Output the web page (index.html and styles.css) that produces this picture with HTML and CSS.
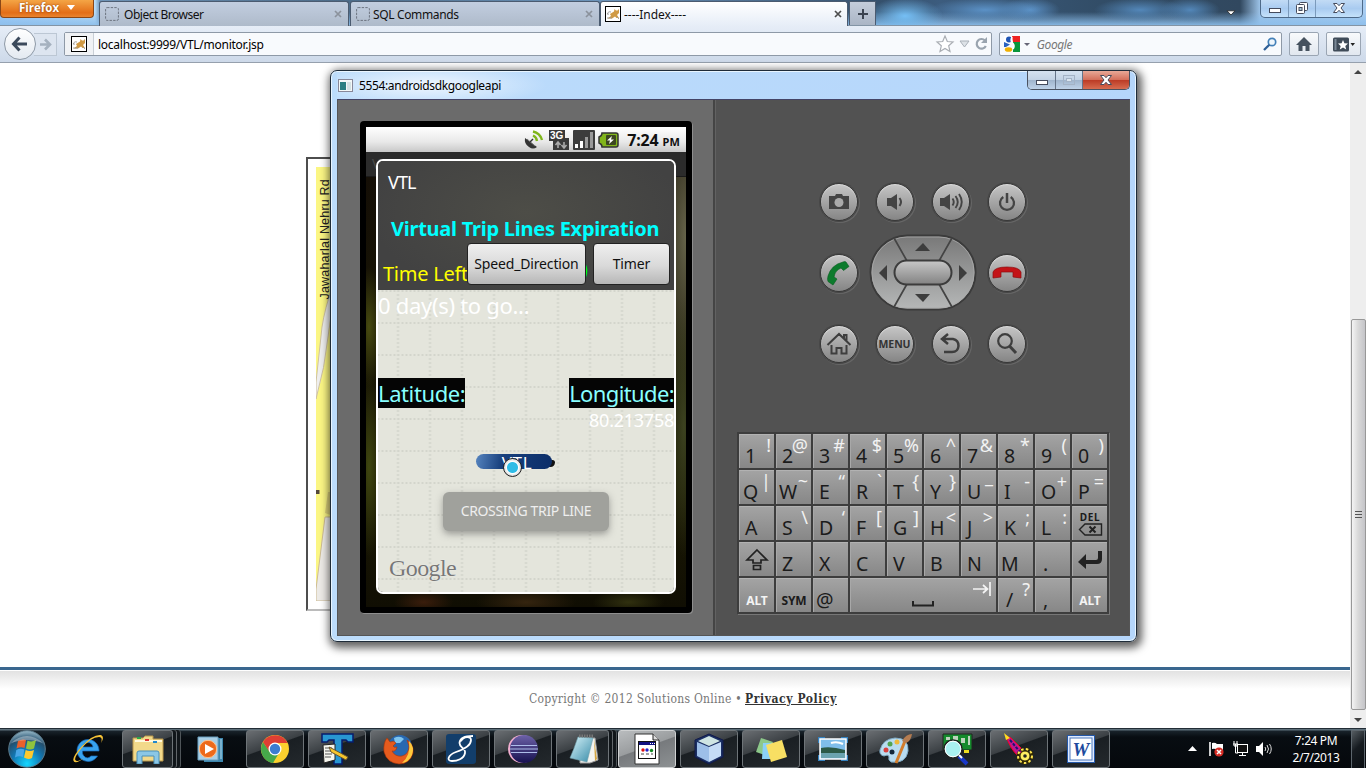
FILE: index.html
```html
<!DOCTYPE html>
<html lang="en">
<head>
<meta charset="utf-8">
<title>----Index----</title>
<link rel="stylesheet" href="styles.css">
</head>
<body>
<svg width="0" height="0" class="defs">
  <defs>
    <symbol id="cat" viewBox="0 0 16 16"><rect x=".5" y=".5" width="15" height="15" fill="#fff" stroke="#000"/><path d="M5 8L9 5.500L9.500 3L11 4.500H12.500L14 3L14 7L12 9L14 12L11.500 12L10 10.500L7 12.500H2.500L6 10Z" fill="#d09a45"/><path d="M4 8Q1.500 9 2.500 7Q4 5 6 6M2 12h5M12 11l2 2" stroke="#999" fill="none" stroke-width=".9"/></symbol>
    <symbol id="blank" viewBox="0 0 14 14"><rect x=".6" y=".6" width="12.8" height="12.8" rx="1.500" fill="none" stroke="#6d7480" stroke-dasharray="2.400 1.200"/></symbol>
    <symbol id="x" viewBox="0 0 8 8"><path d="M1 1L7 7M7 1L1 7" stroke="currentColor" stroke-width="1.700"/></symbol>
    <symbol id="winx" viewBox="0 0 14 12"><path d="M1.500 1.500H5L7 3.700L9 1.500H12.500L9 6L12.500 10.500H9L7 8.300L5 10.500H1.500L5 6Z" fill="#fff" stroke="#454b5c"/></symbol>
    <linearGradient id="pad" x1="0" y1="0" x2="0" y2="1"><stop offset="0" stop-color="#787878"/><stop offset="1" stop-color="#b6b8b8"/></linearGradient>
    <linearGradient id="pill" x1="0" y1="0" x2="0" y2="1"><stop offset="0" stop-color="#c8c8c8"/><stop offset="1" stop-color="#828282"/></linearGradient>
    <radialGradient id="orb" cx=".5" cy=".9" r=".9"><stop offset="0" stop-color="#16d7ff"/><stop offset=".45" stop-color="#1178b4"/><stop offset=".75" stop-color="#24506f"/><stop offset="1" stop-color="#9bbccb"/></radialGradient>
    <linearGradient id="glassblue" x1="0" y1="0" x2="1" y2="1"><stop offset="0" stop-color="#d9f4fa"/><stop offset="1" stop-color="#378ba8"/></linearGradient>
    <linearGradient id="ecl" x1="0" y1="0" x2="0" y2="1"><stop offset="0" stop-color="#6d62a8"/><stop offset="1" stop-color="#16104f"/></linearGradient>
  </defs>
</svg>
<div class="desktop">
  <header class="titlebar">
    <button class="ffmenu">Firefox <i class="tri-w"></i></button>
    <div class="tabs">
      <div class="tab"><svg class="i14"><use href="#blank"/></svg><span>Object Browser</span><svg class="tabx"><use href="#x"/></svg></div>
      <div class="tab"><svg class="i14"><use href="#blank"/></svg><span class="t2">SQL Commands</span><svg class="tabx"><use href="#x"/></svg></div>
      <div class="tab active"><svg class="i16"><use href="#cat"/></svg><span>----Index----</span><svg class="tabx"><use href="#x"/></svg></div>
      <div class="newtab"><svg width="12" height="12"><path d="M6 1V11M1 6H11" stroke="#3b4350" stroke-width="2"/></svg></div>
    </div>
    <svg class="listtabs" width="10" height="6"><path d="M1 .8H9L5 5Z" fill="#fff" stroke="#222" stroke-width=".8"/></svg>
    <div class="winbtns">
      <div class="wb w1"><svg width="12" height="6"><rect x=".5" y=".5" width="11" height="4" fill="#fff" stroke="#454b5c"/></svg></div>
      <div class="wb w2"><svg width="12" height="12"><rect x="3.500" y=".5" width="8" height="8" rx="1" fill="#fff" stroke="#454b5c"/><rect x=".5" y="2.500" width="8" height="9" rx="1" fill="#fff" stroke="#454b5c"/><rect x="3" y="5.500" width="3" height="3" fill="#acd" stroke="#454b5c"/></svg></div>
      <div class="wb w3"><svg width="14" height="12"><use href="#winx"/></svg></div>
    </div>
  </header>

  <nav class="toolbar">
    <div class="navbtns">
      <div class="back"><svg width="18" height="16"><path d="M8.500 1.500L2.500 8L8.500 14.500M3 8H16" fill="none" stroke="#3c4a5c" stroke-width="3"/></svg></div>
      <div class="fwd"><svg width="13" height="13"><path d="M6 1.500L11 6.500L6 11.500M11 6.500H1" fill="none" stroke="#a5b1bf" stroke-width="2.600"/></svg></div>
    </div>
    <div class="url">
      <div class="ident"><svg class="i16"><use href="#cat"/></svg></div>
      <span class="urltext">localhost:9999/VTL/monitor.jsp</span>
      <svg width="56" height="20" class="urlicons"><path d="M10 2L12.300 7.500L18 8L13.700 11.800L15 17.500L10 14.500L5 17.500L6.300 11.800L2 8L7.700 7.500Z" fill="#fff" stroke="#a9adb3" stroke-width="1.200"/><path d="M25 7H34L29.500 13Z" fill="#dde2e7" stroke="#a9b0b8"/><path d="M50 6.500A4.800 4.800 0 1 0 50.800 12" fill="none" stroke="#9aa4af" stroke-width="2.200"/><path d="M52 3V9H46Z" fill="#9aa4af"/></svg>
    </div>
    <div class="search">
      <svg width="16" height="16"><path d="M8 0H16V6H9Z" fill="#e22"/><path d="M9 6H16V16H9Z" fill="#0a963c"/><path d="M0 0H8V8H0Z" fill="#fff"/><circle cx="5" cy="3.500" r="3" fill="#1f55b5"/><path d="M0 6L6 8.500L2 11H0Z" fill="#2a62c0"/><path d="M8 1Q6 5 9 7.500Q11 10 9 13" stroke="#fff" stroke-width="1.600" fill="none"/><ellipse cx="4.500" cy="13.500" rx="3.700" ry="2.300" fill="#f0b000"/></svg>
      <i class="tri-g"></i><em>Google</em>
      <svg class="mag" width="14" height="14"><circle cx="9" cy="5" r="3.700" fill="#eef6fd" stroke="#4380b8" stroke-width="1.700"/><path d="M6.300 7.700L1 13" stroke="#2f6098" stroke-width="2.300"/></svg>
    </div>
    <div class="tbtn home"><svg width="16" height="15"><path d="M8 0L16 8H13.500V14H9.500V9H6.500V14H2.500V8H0Z" fill="#46525f"/></svg></div>
    <div class="tbtn bm"><svg width="22" height="15"><rect x="0" y=".5" width="16" height="14" rx="1.500" fill="#3f4b58"/><rect x="1.500" y="2" width="2" height="11" fill="#7a8896"/><path d="M10 3L11.400 6.300L15 6.500L12.300 9L13.200 12.500L10 10.500L6.800 12.500L7.700 9L5 6.500L8.600 6.300Z" fill="#fff"/><path d="M17.500 6H22L19.700 9Z" fill="#222"/></svg></div>
  </nav>

  <main class="page">
    <div class="content">
      <div class="mapframe">
        <div class="map">
          <svg width="40" height="434"><path d="M40 60Q11 125 6 160L0 215V232Q9 200 12 170Q15 130 40 80Z" fill="#eee" stroke="#cfc2a0"/><path d="M12 325H40V350H20L9 346Z" fill="#ddd27a"/><path d="M9 350H40V434H0V422Z" fill="#eceae6" stroke="#cdbb94"/><rect x="0" y="323" width="3.500" height="4" fill="#54493a"/></svg>
          <span class="road">Jawaharlal Nehru Rd</span>
        </div>
      </div>
      <footer><span class="copy">Copyright © 2012 Solutions Online •</span><a>Privacy Policy</a></footer>
    </div>
    <div class="scroll"><i class="up"></i><div class="thumb"><i></i><i></i><i></i></div><i class="down"></i></div>
  </main>

  <div class="taskbar">
    <div class="start"><svg width="40" height="40"><circle cx="20" cy="20" r="18.300" fill="url(#orb)" stroke="#5c7b8c"/><path d="M11 12q4-2.500 8-1l-1.500 8q-4-1.500-8 .5z" fill="#e9602b"/><path d="M20.500 11.500q4 2 8.500-.5l-2 8.500q-4 2-8 0z" fill="#8fc33e"/><path d="M9.300 21q4-2 8-.5L16 28q-4-1.500-8 .5z" fill="#48a6e6"/><path d="M18.700 21q4 2 8.300 0l-2 8q-4 2-8-.5z" fill="#fdc92e"/><path d="M4 14Q20 0 36 14Q20 8 4 14Z" fill="#fff" opacity=".35"/></svg></div>
    <div class="plain ie"><svg width="34" height="32"><path d="M28 17A11 11 0 1 0 26.500 23H20Q16 27 12.500 22.500Q11 20.500 11.500 18H28ZM11.700 14Q13 9.500 17 9.500Q21 9.500 22 14Z" fill="#38a3ee" stroke="#1769ba" stroke-width=".7"/><path d="M3.500 29Q-1 26 11 13Q22 1 30 2Q34 4 30 10Q32 4 28 4Q20 4 10 16Q0 28 7 28Q10 27 13 25Q7 30 3.500 29Z" fill="#f5c237"/></svg></div>
    <div class="task stack s1"><svg width="34" height="30"><path d="M2 27V4H12L14 2H22V5H32V27Z" fill="#f2d98a" stroke="#b9964a"/><path d="M4 7H31" stroke="#fff9dd" stroke-width="2"/><path d="M6 3h4v2H6z" fill="#2aa84a"/><path d="M14 5h4v2h-4z" fill="#d33"/><path d="M22 7h4v2h-4z" fill="#28c"/><path d="M6 30V19Q6 17 8 17H26Q28 17 28 19V30H23V22H11V30Z" fill="#8bc7e6" stroke="#4a90b8"/></svg></div>
    <div class="plain wmp"><svg width="30" height="28"><path d="M8 3H27V27H8Z" fill="#3d86ad"/><path d="M2 2H22V25H2Z" fill="#a9cfe6" stroke="#6ba0c0"/><path d="M25 4V24" stroke="#b6ddf0"/><circle cx="12" cy="14" r="8.700" fill="#ed6a1b" stroke="#ffc48f"/><path d="M9 9L18 14L9 19Z" fill="#fff"/></svg></div>
    <div class="task"><svg width="30" height="30"><circle cx="15" cy="15" r="14" fill="#fbd02e"/><path d="M3 8A14 14 0 0 0 13 29L19 19L10 18Z" fill="#46a84a"/><path d="M3 8L9 17L15 9H27.500A14 14 0 0 0 3 8Z" fill="#de3e33"/><circle cx="15" cy="15" r="6.500" fill="#fff"/><circle cx="15" cy="15" r="5.200" fill="#3c7dd0"/></svg></div>
    <div class="task"><svg width="34" height="34"><path d="M2 2H33V10H28L26 8H22V32H14V8H9L7 10H2Z" fill="#2897d2" stroke="#071c6c" stroke-width="1.500"/><path d="M3 13L15 12V28L4 31Z" fill="#f6f6ee" stroke="#222"/><path d="M5 16h7M5 19h7M5 22h7M5 25h6" stroke="#555"/><path d="M9 15L13 17L28 25L26 28L11 20Z" fill="#f6c52c" stroke="#653"/></svg></div>
    <div class="task"><svg width="34" height="32"><circle cx="18" cy="14" r="12" fill="#2868b0"/><path d="M12 5Q18 2 22 6L18 10L13 10Z" fill="#7fc4ee"/><path d="M5 5L8 9Q12 7 14 10L11 13Q12 15 15 14Q14 19 10 18Q13 24 20 23Q27 21 27 13L25 7Q32 11 31 20Q28 31 17 31Q5 30 2 19Q1 10 5 5Z" fill="#e65b1d" stroke="#a63409" stroke-width=".6"/><path d="M27 8Q33 14 30 22Q27 29 20 30Q29 22 27 8Z" fill="#fdc93c"/></svg></div>
    <div class="task"><svg width="32" height="32"><rect x="1" y="1" width="30" height="30" rx="3" fill="#123e6b"/><path d="M28 3Q15 3 14.500 10C14.500 15 21 15 20 20C19 26 12 28 7 28C1 28 3 22 11 19C20 16 26 12 26 7C26 3 19 3 16 8" fill="none" stroke="#fff" stroke-width="1.800"/></svg></div>
    <div class="task"><svg width="32" height="32"><circle cx="15" cy="16" r="14" fill="#f1aed0"/><circle cx="17" cy="16" r="14" fill="url(#ecl)"/><path d="M4 12.500H30M3 16H31M4 19.500H30" stroke="#aebdea" stroke-width="1.200"/></svg></div>
    <div class="task stack s2"><svg width="32" height="32"><path d="M13 5H28L31 27L23 30H13Z" fill="#f3f3ef" stroke="#999"/><path d="M27 6L30 26L28 28Z" fill="#d2a340"/><path d="M11 4L26 5L20 29L3 25Q7 16 11 4Z" fill="url(#glassblue)" stroke="#6f9da9" stroke-width=".6"/><path d="M12 3h15" stroke="#777" stroke-width="3" stroke-dasharray="1.500 1"/></svg></div>
    <div class="task on"><svg width="28" height="32"><path d="M2 1H20L26 7V31H2Z" fill="#fff" stroke="#333"/><path d="M20 1V7H26" fill="#ddd" stroke="#222"/><rect x="5.500" y="8.500" width="17" height="17" fill="#fff" stroke="#111"/><path d="M6 9h16v3H6z" fill="#101080"/><path d="M17 10.500h1m1 0h1m1 0h1" stroke="#fff"/><circle cx="10" cy="17" r="1.700" fill="#d11"/><circle cx="14" cy="17" r="1.700" fill="#22c"/><circle cx="18.500" cy="17.500" r="1.700" fill="#182"/><path d="M8 21h3m2 0h3m2 0h2" stroke="#444"/></svg></div>
    <div class="task"><svg width="32" height="32"><path d="M16 1L30 7V24L16 31L2 24V7Z" fill="#1b2f63" stroke="#111a4a"/><path d="M16 3L27 8L16 13L5 8Z" fill="#cfe5e3"/><path d="M4 9L16 14V29L4 23Z" fill="#9dbfe8"/><path d="M28 9L16 14V29L28 23Z" fill="#c5dcf6"/></svg></div>
    <div class="task"><svg width="34" height="30"><path d="M7 4L19 8L14 22L2 18Z" fill="#8cc88a"/><path d="M9 9L22 9V25H8Z" fill="#8bd0f7"/><path d="M12 11L28 6L33 23L17 28Z" fill="#f8df63"/></svg></div>
    <div class="task"><svg width="32" height="28"><path d="M1 2H8V8H1ZM24 2H31V8H24ZM1 20H8V26H1ZM24 20H31V26H24Z" fill="#3481bf"/><rect x="3" y="4" width="26" height="20" fill="#7fbdea" stroke="#fff" stroke-width="1.500"/><path d="M4 13Q14 11 28 15V19H4Z" fill="#2b5947"/><path d="M4 18H28V23H4Z" fill="#6aa3af"/><path d="M14 8q6-2 12 1" stroke="#fff" fill="none" stroke-width="2"/></svg></div>
    <div class="task"><svg width="34" height="32"><path d="M17 5Q31 5 30 18Q28 31 13 29Q10 27 11 24Q11 21 6 23Q1 22 2 17Q5 6 17 5Z" fill="#b9dcf0" stroke="#7faac4"/><circle cx="8" cy="17" r="2.500" fill="#d8403e"/><circle cx="12" cy="11" r="2.500" fill="#51a351"/><circle cx="19" cy="9" r="2.500" fill="#edb93b"/><circle cx="14" cy="19" r="2.500" fill="#132638"/><path d="M27 8L18 30" stroke="#d37d2c" stroke-width="3"/><path d="M24 8Q28 1 34 1Q33 8 28 10Z" fill="#b47c51"/></svg></div>
    <div class="task"><svg width="34" height="34"><path d="M3 2H32V18H3Z" fill="#148a2c" stroke="#222"/><path d="M6 5h4v3H6zM13 4h5v4h-5zM21 6h4v5h-4zM28 4h2v9h-2z" fill="#bcd3bc"/><rect x="24" y="18" width="5" height="3" fill="#ed2"/><circle cx="13" cy="17" r="9" fill="#a8f0f0" stroke="#222" stroke-width="1.500"/><circle cx="13" cy="17" r="7.800" fill="none" stroke="#fff" stroke-width="1"/><path d="M19 24L27 32" stroke="#1837c8" stroke-width="4"/><path d="M19 23L22 26" stroke="#fff" stroke-width="2"/></svg></div>
    <div class="task"><svg width="32" height="34"><path d="M3 4L8 6L21 19L14 23Q7 16 3 4Z" fill="#c2158d" stroke="#f02"/><path d="M7 8L17 20" stroke="#1b1470" stroke-width="2" stroke-dasharray="3 1.500"/><path d="M1 1L7 6L3 8Z" fill="#fd2"/><circle cx="22" cy="24" r="6" fill="none" stroke="#332a00" stroke-width="5" stroke-dasharray="3 1.700"/><circle cx="22" cy="24" r="5" fill="#ffee62" stroke="#362c00"/><circle cx="22" cy="24" r="7" fill="none" stroke="#ffe650" stroke-width="2" stroke-dasharray="2.500 2.300"/><circle cx="22" cy="24" r="1.800" fill="#222"/></svg></div>
    <div class="task"><svg width="30" height="30"><rect x="1.500" y="1.500" width="27" height="27" fill="#dfeaff" stroke="#2458a9"/><rect x="4" y="4" width="22" height="22" fill="#fff" stroke="#4d78bd"/><text x="15" y="22" text-anchor="middle" class="wletter">W</text></svg></div>
    <div class="tray">
      <svg width="40" height="18"><path d="M3 11L7.500 6L12 11Z" fill="#fff"/><path d="M25 2V16" stroke="#fff" stroke-width="1.600"/><path d="M27 3Q30 2 32 4H38V10H32Q30 8 27 9Z" fill="#fff"/><circle cx="34" cy="12" r="4.600" fill="#d62c25"/><path d="M32 10L36 14M36 10L32 14" stroke="#fff" stroke-width="1.500"/></svg>
      <svg width="15" height="16"><rect x="4.500" y="3.500" width="10" height="8" fill="#111" stroke="#fff"/><path d="M0 3H5M2.500 3V12H5M1 0V5H4V0M6 14.500H13M9.500 12V15" fill="none" stroke="#fff"/></svg>
      <svg width="16" height="16"><path d="M0 5H3L7 1V15L3 11H0Z" fill="#fff"/><path d="M9 6q1.500 2 0 4M11 4q3 4 0 8M13.500 3q3.500 5 0 10" fill="none" stroke="#ddd"/></svg>
    </div>
    <div class="clock"><span>7:24 PM</span><span>2/7/2013</span></div>
    <div class="showdesk"></div>
  </div>

  <section class="emu">
    <div class="emutitle">
      <svg width="15" height="13"><rect x=".5" y=".5" width="14" height="12" fill="#f4f8f8" stroke="#889"/><rect x="2" y="3" width="6" height="8" fill="#2b7f82"/><rect x="9" y="3" width="4" height="8" fill="#d5e2e4"/></svg>
      <span class="emuname">5554:androidsdkgoogleapi</span>
      <div class="emubtns">
        <div class="eb e1"><svg width="12" height="6"><rect x=".5" y=".5" width="11" height="4" fill="#fff" stroke="#454b5c"/></svg></div>
        <div class="eb e2"><svg width="12" height="10"><rect x=".5" y=".5" width="11" height="9" fill="none" stroke="#a4b3c6"/><rect x="3.500" y="3.500" width="5" height="3" fill="#dbe6f0" stroke="#a4b3c6"/></svg></div>
        <div class="eb e3"><svg width="14" height="12"><use href="#winx"/></svg></div>
      </div>
    </div>
    <div class="emubody">
      <div class="left">
        <div class="bezel"><div class="screen">
          <div class="status">
            <svg width="22" height="20"><path d="M2 8Q1 14 6 17Q10 20 14 17Z" fill="#333"/><path d="M4 9L12 16" stroke="#777"/><path d="M7 12L10 9" stroke="#333" stroke-width="1.500"/><path d="M10 5.500Q13.500 7 14 11M10 1.500Q17 3 19 10" fill="none" stroke="#7eb51a" stroke-width="2.400"/></svg>
            <svg width="22" height="22"><path d="M1 1H17V9H21V21H5V12H1Z" fill="#3a3a3a"/><text x="2" y="10" class="g3">3G</text><path d="M10 19V14M7.500 16L10 13L12.500 16M16 13V18M13.500 16L16 19L18.500 16" stroke="#aaa" stroke-width="1.600" fill="none"/></svg>
            <svg width="22" height="22"><rect x="0" y="1" width="22" height="20" rx="1" fill="#3c3c3c"/><path d="M3.500 19V15M8.500 19V12" stroke="#fff" stroke-width="3"/><path d="M13.500 19V8M18.500 19V3" stroke="#999" stroke-width="3"/></svg>
            <svg width="21" height="16"><path d="M4 1H18Q20 1 20 3V13Q20 15 18 15H4Q4 12 1 11V5Q4 4 4 1Z" fill="#81b51b" stroke="#333" stroke-width="1.500"/><rect x="8" y="3" width="10" height="10" rx="1" fill="#3c4721"/><path d="M14 4L9 8.500H12L11 12L16 7.500H13Z" fill="#fff"/></svg>
            <b>7:24 <small>PM</small></b>
          </div>
          <div class="apptitle">VTL</div>
          <div class="dialog">
            <div class="dtop">
              <div class="dname">VTL</div>
              <div class="dhead">Virtual Trip Lines Expiration</div>
              <div class="drow"><span class="tleft">Time Left</span><i class="green">)</i><span class="abtn sp">Speed_Direction</span><span class="abtn ti">Timer</span></div>
            </div>
            <div class="dmap">
              <svg class="grid" width="296" height="302"><defs><pattern id="mg" width="32" height="32" patternUnits="userSpaceOnUse" x="3.500" y="0"><path d="M0 1H32M16.500 0V32" stroke="#d3d5cc" stroke-width="2" stroke-dasharray="2 2"/></pattern></defs><rect width="296" height="302" fill="url(#mg)"/></svg>
              <div class="days">0 day(s) to go...</div>
              <div class="coords"><div><mark>Latitude:</mark></div><div class="lon"><mark>Longitude:</mark><span>80.213758</span></div></div>
              <div class="marker"><i class="tip"></i><div class="vpill">VTL</div><i class="dot"></i></div>
              <div class="toast">CROSSING TRIP LINE</div>
              <div class="goog">Google</div>
            </div>
          </div>
        </div></div>
      </div>
      <div class="right">
        <div class="hw">
          <div class="hb"><svg width="24" height="20"><path d="M2 4H8L9 2H15L16 4H22V17H2Z" fill="#444"/><circle cx="12" cy="10.500" r="4.500" fill="#aaa"/></svg></div>
          <div class="hb"><svg width="20" height="18"><path d="M2 5H6L12 1V17L6 13H2Z" fill="#444"/><path d="M14.500 5Q17.500 9 14.500 13" fill="none" stroke="#444" stroke-width="2"/></svg></div>
          <div class="hb"><svg width="26" height="20"><path d="M2 6H6L12 2V18L6 14H2Z" fill="#444"/><path d="M14.500 6.500Q17 10 14.500 13.500M17.500 4Q22 10 17.500 16M21 2Q26.500 10 21 18" fill="none" stroke="#444" stroke-width="1.900"/></svg></div>
          <div class="hb"><svg width="20" height="20"><path d="M6.300 5A7 7 0 1 0 13.700 5" fill="none" stroke="#444" stroke-width="2.300"/><path d="M10 1V11" stroke="#444" stroke-width="2.500"/></svg></div>
          <div class="hb"><svg width="28" height="26"><path d="M3 16Q6 5 18 2Q20 1 21 2L24 6.500L18.500 10.500L16 8Q10 10.500 9 17L12 19L8 25L3 21.500Q2 20 3 16Z" fill="#0c7b2c" stroke="#075c1f" stroke-width=".6"/></svg></div>
          <div class="dpad"><svg width="108" height="78"><rect x="1.500" y="1.500" width="105" height="74" rx="37" fill="url(#pad)" stroke="#3b3b3b" stroke-width="2"/><rect x="3" y="3" width="102" height="71" rx="35" fill="none" stroke="#aaa" stroke-width=".8"/><path d="M25 4L38 27M83 4L70 27M25 73L38 50M83 73L70 50" stroke="#444" stroke-width="1.700"/><rect x="25.500" y="26.500" width="57" height="24" rx="12" fill="url(#pill)" stroke="#3c3c3c" stroke-width="2"/><path d="M46 17L54 9L61 17ZM18 31V47L10 39ZM90 31V47L98 39ZM46 60H61L54 68Z" fill="#3d3d3d"/></svg></div>
          <div class="hb"><svg width="30" height="14"><path d="M1 6Q3 1 15 1Q27 1 29 6V12L21 11V6H9V11L1 12Z" fill="#c31317" stroke="#8d0c0f" stroke-width=".7"/></svg></div>
          <div class="hb"><svg width="26" height="24"><path d="M1.500 13L13 2L24.500 13M18 6V3H20.500V9M5.500 13V21.500H10.500V16H15.500V21.500H20.500V13" fill="none" stroke="#3e3e3e" stroke-width="2"/></svg></div>
          <div class="hb menu">MENU</div>
          <div class="hb"><svg width="24" height="24"><path d="M9 2L3 7L9 12M3.500 7H14Q19.500 8 19.500 14Q19 20 13 20H5" fill="none" stroke="#3e3e3e" stroke-width="2.500"/></svg></div>
          <div class="hb"><svg width="24" height="24"><circle cx="10" cy="9" r="6.800" fill="none" stroke="#3e3e3e" stroke-width="2.200"/><path d="M14.500 14L21 21" stroke="#3e3e3e" stroke-width="3"/></svg></div>
        </div>
        <div class="kb">
          <div class="k">1<i>!</i></div><div class="k">2<i>@</i></div><div class="k">3<i>#</i></div><div class="k">4<i>$</i></div><div class="k">5<i>%</i></div><div class="k">6<i>^</i></div><div class="k">7<i>&amp;</i></div><div class="k">8<i>*</i></div><div class="k">9<i>(</i></div><div class="k">0<i>)</i></div>
          <div class="k q">Q<i>|</i></div><div class="k w">W<i>~</i></div><div class="k">E<i>“</i></div><div class="k">R<i>`</i></div><div class="k">T<i>{</i></div><div class="k">Y<i>}</i></div><div class="k">U<i class="us">_</i></div><div class="k">I<i>-</i></div><div class="k">O<i>+</i></div><div class="k">P<i>=</i></div>
          <div class="k">A</div><div class="k">S<i>\</i></div><div class="k">D<i>‘</i></div><div class="k">F<i>[</i></div><div class="k">G<i>]</i></div><div class="k">H<i>&lt;</i></div><div class="k">J<i>&gt;</i></div><div class="k">K<i>;</i></div><div class="k">L<i>:</i></div>
          <div class="k ic del"><b>DEL</b><svg width="25" height="13"><path d="M1.500 6.500L7 1H23.500V12H7Z" fill="none" stroke="#222" stroke-width="1.400"/><path d="M11.500 3.500L17.500 9.500M17.500 3.500L11.500 9.500" stroke="#222" stroke-width="2"/></svg></div>
          <div class="k ic"><svg width="24" height="24"><path d="M12 2L22 12H16V15H8V12H2Z" fill="none" stroke="#222" stroke-width="1.700"/><path d="M8.500 17.500H15.500V21.500H8.500Z" fill="none" stroke="#222" stroke-width="1.700"/></svg></div><div class="k">Z</div><div class="k">X</div><div class="k">C</div><div class="k">V</div><div class="k">B</div><div class="k">N</div><div class="k w">M</div><div class="k dotk">.</div>
          <div class="k ic"><svg width="26" height="20"><path d="M1 12L9 4V10H19Q21 10 21 8V1H25V9Q25 14 20 14H9V19Z" fill="#222"/></svg></div>
          <div class="k alt">ALT</div><div class="k sym">SYM</div><div class="k w">@</div>
          <div class="k space"><svg width="22" height="7"><path d="M1 1V5.500H21V1" fill="none" stroke="#222" stroke-width="2"/></svg><svg class="tabkey" width="20" height="16"><path d="M1 8H15M11 4L15.500 8L11 12M18 1V15" fill="none" stroke="#f4f4f4" stroke-width="1.700"/></svg></div>
          <div class="k sl">/<i>?</i></div><div class="k dotk">,</div><div class="k alt">ALT</div>
        </div>
      </div>
    </div>
  </section>
</div>
</body>
</html>
```

FILE: styles.css
```css
* { box-sizing: border-box; }
body { margin: 0; overflow: hidden; font-family: "Noto Sans", sans-serif; }
svg { display: block; flex: none; }
.defs { position: absolute; }
.desktop { position: relative; width: 1366px; height: 768px; display: flex; flex-direction: column; overflow: hidden; background: #fff; }
.i14 { width: 14px; height: 14px; }
.i16 { width: 16px; height: 16px; }

/* browser window frame */
.titlebar { height: 26px; display: flex; align-items: flex-start; border-bottom: 1px solid #8394a5;
  background:
    radial-gradient(ellipse 38px 18px at 905px 16px, #75bff5, transparent),
    radial-gradient(ellipse 56px 12px at 985px 10px, #5b91c6, transparent),
    radial-gradient(ellipse 30px 12px at 1030px 10px, #5b91c6, transparent),
    radial-gradient(ellipse 46px 12px at 1140px 10px, #5387b9, transparent),
    radial-gradient(ellipse 30px 12px at 1190px 10px, #5387b9, transparent),
    linear-gradient(transparent 12px, rgba(140,190,235,.9)),
    linear-gradient(90deg, #9ecbfa 0, #b9dcf7 95px, #6e93b6 100px, #4c6b88 340px, #6c94ba 600px, #35506c 880px, #3c5c7e 940px, #324d67 1100px, #31485f 1240px, #9cc3e8 1260px, #a9cdf2 100%); }
.ffmenu { width: 94px; height: 18px; margin: 0 5px 0 0; padding: 0 0 2px; border: 1px solid #8a4717; border-top: 0; border-radius: 0 0 4px 4px; background: linear-gradient(#f4a545, #e36e18 75%, #e9842f); color: #fff; font: bold 11.5px/14px "Open Sans", sans-serif; text-shadow: 0 0 2px #7a3400; display: flex; align-items: center; justify-content: center; gap: 8px; }
.tri-w { border: 4px solid transparent; border-top: 5px solid #fff; border-bottom: 0; }
.tabs { display: flex; gap: 1px; padding-top: 1px; }
.tab { width: 250px; height: 25px; padding: 0 6px 0 5px; display: flex; align-items: center; gap: 5px; border: 1px solid #4b5b70; border-bottom: 0; border-radius: 3px 3px 0 0; background: linear-gradient(#c2cee0, #aebaca); font-size: 12px; letter-spacing: -.48px; color: #111; }
.tab .t2 { margin-left: -2px; letter-spacing: -.35px; }
.tab.active { width: 248px; margin-left: -1px; padding: 0 5px 0 4px; gap: 3px; background: linear-gradient(#fff, #e6edf7); letter-spacing: -.05px; }
.tabx { width: 8px; height: 8px; margin-left: auto; color: #8b929c; }
.active .tabx { color: #4d4d4d; }
.newtab { width: 27px; height: 24px; display: grid; place-items: center; border: 1px solid #4b5b70; border-bottom: 0; background: linear-gradient(#c4cddb, #aab5c5); }
.listtabs { margin: 10px 24px 0 auto; }
.winbtns { display: flex; width: 103px; height: 18px; margin-right: 3px; border: 1px solid #4e6a89; border-top: 0; border-radius: 0 0 5px 5px; background: linear-gradient(#c2dbf5, #a9cbf0 50%, #c5e2fb); }
.wb { display: grid; place-items: center; border-right: 1px solid #7b9abb; padding-bottom: 1px; }
.w1 { width: 28px; padding-top: 5px; } .w2 { width: 27px; } .w3 { flex: 1; border: 0; }

.toolbar { height: 37px; display: flex; align-items: center; gap: 7px; padding: 0 5px 0 4px; background: linear-gradient(#e6edf7, #cdd9e9); border-bottom: 1px solid #96a0ad; }
.navbtns { width: 53px; display: flex; align-items: center; }
.back { width: 32px; height: 32px; border-radius: 50%; border: 1px solid #8e99a6; background: linear-gradient(#fff, #e3e9f1); display: grid; place-items: center; z-index: 1; }
.fwd { width: 23px; height: 23px; margin-left: -2px; display: grid; place-items: center; border: 1px solid #bcc7d4; border-left: 0; background: #dde5f0; }
.url, .search { height: 24px; display: flex; align-items: center; border: 1px solid #8e99a7; border-radius: 2px; background: #f8fafd; }
.url { width: 930px; }
.ident { width: 29px; height: 22px; display: grid; place-items: center; border-right: 1px solid #c9cfd6; background: #f0f2f5; }
.urltext { margin-left: 4px; font-size: 12px; letter-spacing: -.26px; color: #000; }
.urlicons { margin: 0 0 0 auto; }
.search { width: 284px; padding: 0 5px 0 4px; font-size: 12px; color: #777; gap: 4px; margin-right: -1px; }
.search em { margin-left: 3px; letter-spacing: -.4px; }
.tri-g { border: 3px solid transparent; border-top-color: #667; border-bottom: 0; }
.mag { margin-left: auto; margin-right: -1px; }
.tbtn { height: 24px; display: grid; place-items: center; border: 1px solid #9aa5b3; border-radius: 2px; background: linear-gradient(#f8fafc, #e1e7ef); }
.home { width: 30px; margin-left: 1px; } .bm { width: 35px; }

/* web page */
.page { height: 665px; display: flex; }
.content { flex: 1; display: flex; flex-direction: column; justify-content: space-between; padding-top: 94px; }
.mapframe { width: 60px; height: 454px; margin-left: 306px; padding: 8px; border: 2px solid #4d4d4d; border-bottom-color: #bbb; }
.map { position: relative; width: 40px; height: 434px; background: #fbf684; overflow: hidden; }
.road { position: absolute; left: 2px; top: 12px; writing-mode: vertical-rl; transform: rotate(180deg); font: 12.5px/14px "Liberation Sans", sans-serif; letter-spacing: .2px; color: #222; white-space: nowrap; }
footer { height: 61px; border-top: 3px solid #3a678f; padding: 19px 0 0 529px; background: linear-gradient(#fff 1px, #e2e2e2 1px, #fff 19px); display: flex; gap: 3px; font: 12px/20px "DejaVu Serif Condensed", "DejaVu Serif", serif; font-stretch: condensed; color: #777; white-space: nowrap; }
.copy { width: 213px; letter-spacing: .27px; }
footer a { font-weight: bold; color: #333; text-decoration: underline; letter-spacing: .58px; }
.scroll { width: 16px; background: #eee; display: flex; flex-direction: column; align-items: center; padding: 7px 0 6px; }
.up { border: 4px solid transparent; border-bottom-color: #444; border-top: 0; margin-bottom: 245px; }
.thumb { width: 15px; height: 391px; border: 1px solid #989898; border-radius: 2px; background: linear-gradient(90deg, #f4f4f4, #dadada 45%, #c4c4c8); display: flex; flex-direction: column; align-items: center; justify-content: center; gap: 2px; }
.thumb i { width: 7px; height: 1px; background: #555; }
.down { border: 4px solid transparent; border-top-color: #444; border-bottom: 0; margin-top: 8px; }

/* taskbar */
.taskbar { height: 40px; display: flex; align-items: center; padding-top: 1px; background: linear-gradient(#5c6e79 1px, #19232b 2px, #080d12 8px, #05080c); border-top: 1px solid #222c35; }
.start { width: 54px; padding-left: 7px; }
.plain { display: grid; place-items: center; }
.ie { width: 68px; }
.wmp { width: 67px; padding-right: 4px; }
.task { width: 58px; height: 38px; margin-right: 4px; flex: none; display: grid; place-items: center; border: 1px solid #6e7478; border-radius: 3px; background: linear-gradient(160deg, #6a6e72 0, #3b4044 42%, #1a1f23 44%, #24292d 100%); }
.task.on { background: linear-gradient(160deg, #b9bcbe, #9a9d9f 45%, #777a7d 47%, #8d9193); border-color: #cfd1d2; }
.stack { box-shadow: 3px 0 0 #11161a, 4px 0 0 #62676b, 7px 0 0 #11161a, 8px 0 0 #4f5559; }
.s1 { width: 51px; margin-right: 6px; } .s2 { width: 53px; margin-right: 9px; }
.wletter { font: italic bold 19px "Liberation Serif", serif; fill: #1f4b9e; }
.tray { margin-left: 71px; display: flex; align-items: center; gap: 8px; width: 94px; }
.clock { margin-left: 13px; width: 48px; height: 36px; display: flex; flex-direction: column; align-items: center; font-size: 12px; line-height: 17px; color: #fff; letter-spacing: -.4px; white-space: nowrap; padding-top: 1px; }
.showdesk { width: 14px; height: 39px; margin: 0 1px 0 auto; border: 1px solid #5d666d; background: linear-gradient(135deg, #555c61, #161b20 45%, #0a0e12); }

/* emulator window */
.emu { position: absolute; left: 330px; top: 70px; width: 807px; height: 572px; border: 1px solid #1e2b38; border-radius: 7px; padding: 0 6px 6px; background: linear-gradient(90deg, #bcdcfb, #b5d6fb); box-shadow: inset 0 0 0 1px #e8f5ff, 2px 3px 9px 3px rgba(0,0,0,.62); }
.emutitle { height: 28px; display: flex; align-items: center; gap: 6px; padding-left: 1px; font-size: 12px; color: #000; letter-spacing: -.36px; background: radial-gradient(ellipse 120px 22px at 90px 14px, rgba(255,255,255,.75), transparent); }
.emubtns { display: flex; margin: 0 0 9px auto; height: 19px; border: 1px solid #4a5260; border-top: 0; border-radius: 0 0 5px 5px; }
.eb { display: grid; place-items: center; border-right: 1px solid #66758a; background: linear-gradient(#d5e2f0, #c3d3e5 48%, #9fb4cc 50%, #bed2e8); }
.e1 { width: 28px; padding-top: 5px; border-radius: 0 0 0 4px; } .e2 { width: 27px; }
.e3 { width: 46px; border: 0; border-radius: 0 0 4px 0; background: linear-gradient(#e8a897, #d4705c 48%, #bb3a24 50%, #d76c50); }
.emubody { height: 537px; border: 1px solid #555; border-top-color: #446; display: flex; background: #525252; }
.left { width: 377px; padding: 21px 0 0 22px; background: #6b6b6b; border-right: 2px solid #454545; }
.bezel { width: 332px; height: 492px; padding: 6px; background: #000; border-radius: 4px; box-shadow: 1px 1px 0 #8e8e8e; }
.screen { position: relative; width: 320px; height: 480px; overflow: hidden; background: radial-gradient(ellipse 30px 12px at 18% 99%, #3a1d0c, transparent), radial-gradient(ellipse 50px 14px at 50% 99%, #35240f, transparent), radial-gradient(ellipse 36px 12px at 82% 99%, #30300f, transparent), radial-gradient(ellipse 14px 60px at 3px 200px, #474a10, transparent), radial-gradient(ellipse 14px 90px at 3px 340px, #3f4610, transparent), radial-gradient(ellipse 18px 130px at 318px 300px, #3c4220, transparent), radial-gradient(ellipse 30px 170px at 320px 110px, #66644a, transparent), linear-gradient(#130c06, #171405 40%, #1c1a04 75%, #100e03); }
.status { height: 25px; padding: 0 6px 0 157px; display: flex; align-items: center; background: linear-gradient(#fff, #e8e8e8 60%, #c8c8c8); color: #111; }
.status svg { margin-right: 3px; }
.status b { margin-left: auto; font-size: 16px; letter-spacing: -.2px; white-space: nowrap; }
.status small { font-size: 11px; letter-spacing: .2px; }
.g3 { font: bold 10px "Liberation Sans", sans-serif; fill: #fff; }
.apptitle { height: 25px; padding-left: 6px; background: #2b2b2b; border-bottom: 1px solid #191919; color: #4c4c4c; font-size: 14px; line-height: 24px; }
.dialog { position: absolute; left: 10px; top: 32px; width: 300px; height: 435px; border: 2px solid #fff; border-radius: 7px; overflow: hidden; background: #444; }
.dtop { height: 129px; padding-top: 8px; background: radial-gradient(ellipse at 50% 40%, #4d4d47, #424242 75%); }
.dname { padding-left: 10px; font-size: 18px; line-height: 26px; color: #fff; letter-spacing: -.9px; }
.dhead { margin-top: 21px; padding-left: 13px; font-size: 20px; line-height: 26px; font-weight: bold; color: #0ff; white-space: nowrap; letter-spacing: -.25px; }
.drow { height: 42px; margin-top: 1px; display: flex; padding: 0 4px 0 5px; }
.tleft { width: 84px; padding-top: 18px; font-size: 20px; line-height: 26px; color: #ff0; white-space: nowrap; letter-spacing: -.25px; }
.green { width: 0; color: #0f0; font: 20px/26px "Noto Sans", sans-serif; padding-top: 13px; text-indent: 115px; }
.abtn { height: 42px; border: 1px solid #222; border-radius: 4px; background: linear-gradient(#efefef, #d9d9d9 55%, #b7b7b7); color: #111; font-size: 14px; line-height: 40px; text-align: center; white-space: nowrap; z-index: 1; letter-spacing: -.15px; }
.sp { width: 120px; } .ti { width: 78px; margin-left: 7px; }
.dmap { position: relative; height: 302px; background: #e4e5dc; color: #fff; }
.grid { position: absolute; left: 0; top: 0; }
.days { position: relative; height: 88px; font-size: 22px; line-height: 31px; letter-spacing: -.3px; }
.coords { position: relative; display: flex; justify-content: space-between; height: 76px; }
mark { display: block; height: 30px; background: #050505; color: #8ff; font-size: 22px; line-height: 31px; letter-spacing: -.4px; white-space: nowrap; }
.lon mark { letter-spacing: -.62px; }
.lon { text-align: right; } .lon span { display: block; font-size: 18px; line-height: 25px; letter-spacing: -.25px; }
.marker { position: relative; width: 76px; height: 15px; margin: 0 0 23px 98px; }
.vpill { position: relative; height: 15px; border-radius: 8px; background: linear-gradient(100deg, #5684bf, #173f7c 35%, #0b2d68); text-align: center; font-size: 17px; line-height: 17px; letter-spacing: .6px; padding-left: 6px; }
.tip { position: absolute; right: -3px; top: 6px; width: 14px; height: 7px; border-radius: 2px 5px 9px 2px; background: #111; }
.dot { position: absolute; left: 27px; top: 4px; width: 19px; height: 19px; border-radius: 50%; border: 1.500px solid #222; background: radial-gradient(circle, #2fbce6 5px, #fff 6px, #eee 7px, #aaa); }
.toast { position: relative; width: 166px; height: 39px; margin-left: 65px; border-radius: 6px; background: #a0a19c; box-shadow: 0 3px 7px rgba(80,80,80,.5); color: #eee; text-align: center; font-size: 14px; line-height: 38px; letter-spacing: -.35px; white-space: nowrap; }
.goog { position: relative; margin: 24px 0 0 11px; font: 24px/26px "Liberation Serif", serif; color: #777; letter-spacing: -.6px; text-shadow: 0 0 1px #fff; }

/* hardware buttons */
.right { flex: 1; border-left: 1px solid #626262; background: #525252; }
.hw { display: grid; grid-template-columns: repeat(4, 38px); grid-template-rows: repeat(3, 38px); gap: 33px 18px; padding: 83px 0 0 103.5px; height: 332px; align-content: start; }
.hb { border-radius: 50%; border: 1px solid #383838; background: linear-gradient(#c6c6c6, #858585); box-shadow: 0 0 0 1px #474747, 1px 1px 0 1px #666, inset 0 1px 1px #ddd; display: grid; place-items: center; }
.menu { font-size: 10.5px; font-weight: bold; color: #333; letter-spacing: -.1px; }
.dpad { grid-column: 2 / 4; display: grid; place-content: center; }
.kb { display: grid; grid-template-columns: repeat(10, 35px); grid-template-rows: repeat(5, 34px); gap: 2px; width: 372px; padding: 2px; margin-left: 21px; background: #3d3d3d; box-shadow: 1px 1px 0 #777; }
.k { position: relative; padding: 7px 0 0 5px; background: linear-gradient(#a3a3a3, #878787); border-top: 1px solid #b2b2b2; border-left: 1px solid #a8a8a8; font-size: 19.5px; line-height: 27px; color: #1b1b1b; height: 34px; }
.k i { position: absolute; right: 3px; top: -2px; font-style: normal; font-size: 18px; line-height: 24px; color: #f2f2f2; }
.k i.us { top: -7px; }
.k.q { padding-left: 3px; }
.k.w { padding-left: 2px; } .k.sl, .k.dotk { padding-left: 7px; }
.k.ic { display: flex; flex-direction: column; align-items: center; justify-content: center; padding: 0; }
.del b { font-size: 10px; line-height: 12px; letter-spacing: .6px; }
.k.alt, .k.sym { padding: 9px 0 0; text-align: center; font-size: 12px; font-weight: bold; line-height: 26px; color: #f4f4f4; letter-spacing: -.1px; }
.k.sym { color: #1b1b1b; }
.k.space { grid-column: span 4; padding: 21px 0 0 61px; }
.tabkey { position: absolute; right: 4px; top: 2px; }
```
